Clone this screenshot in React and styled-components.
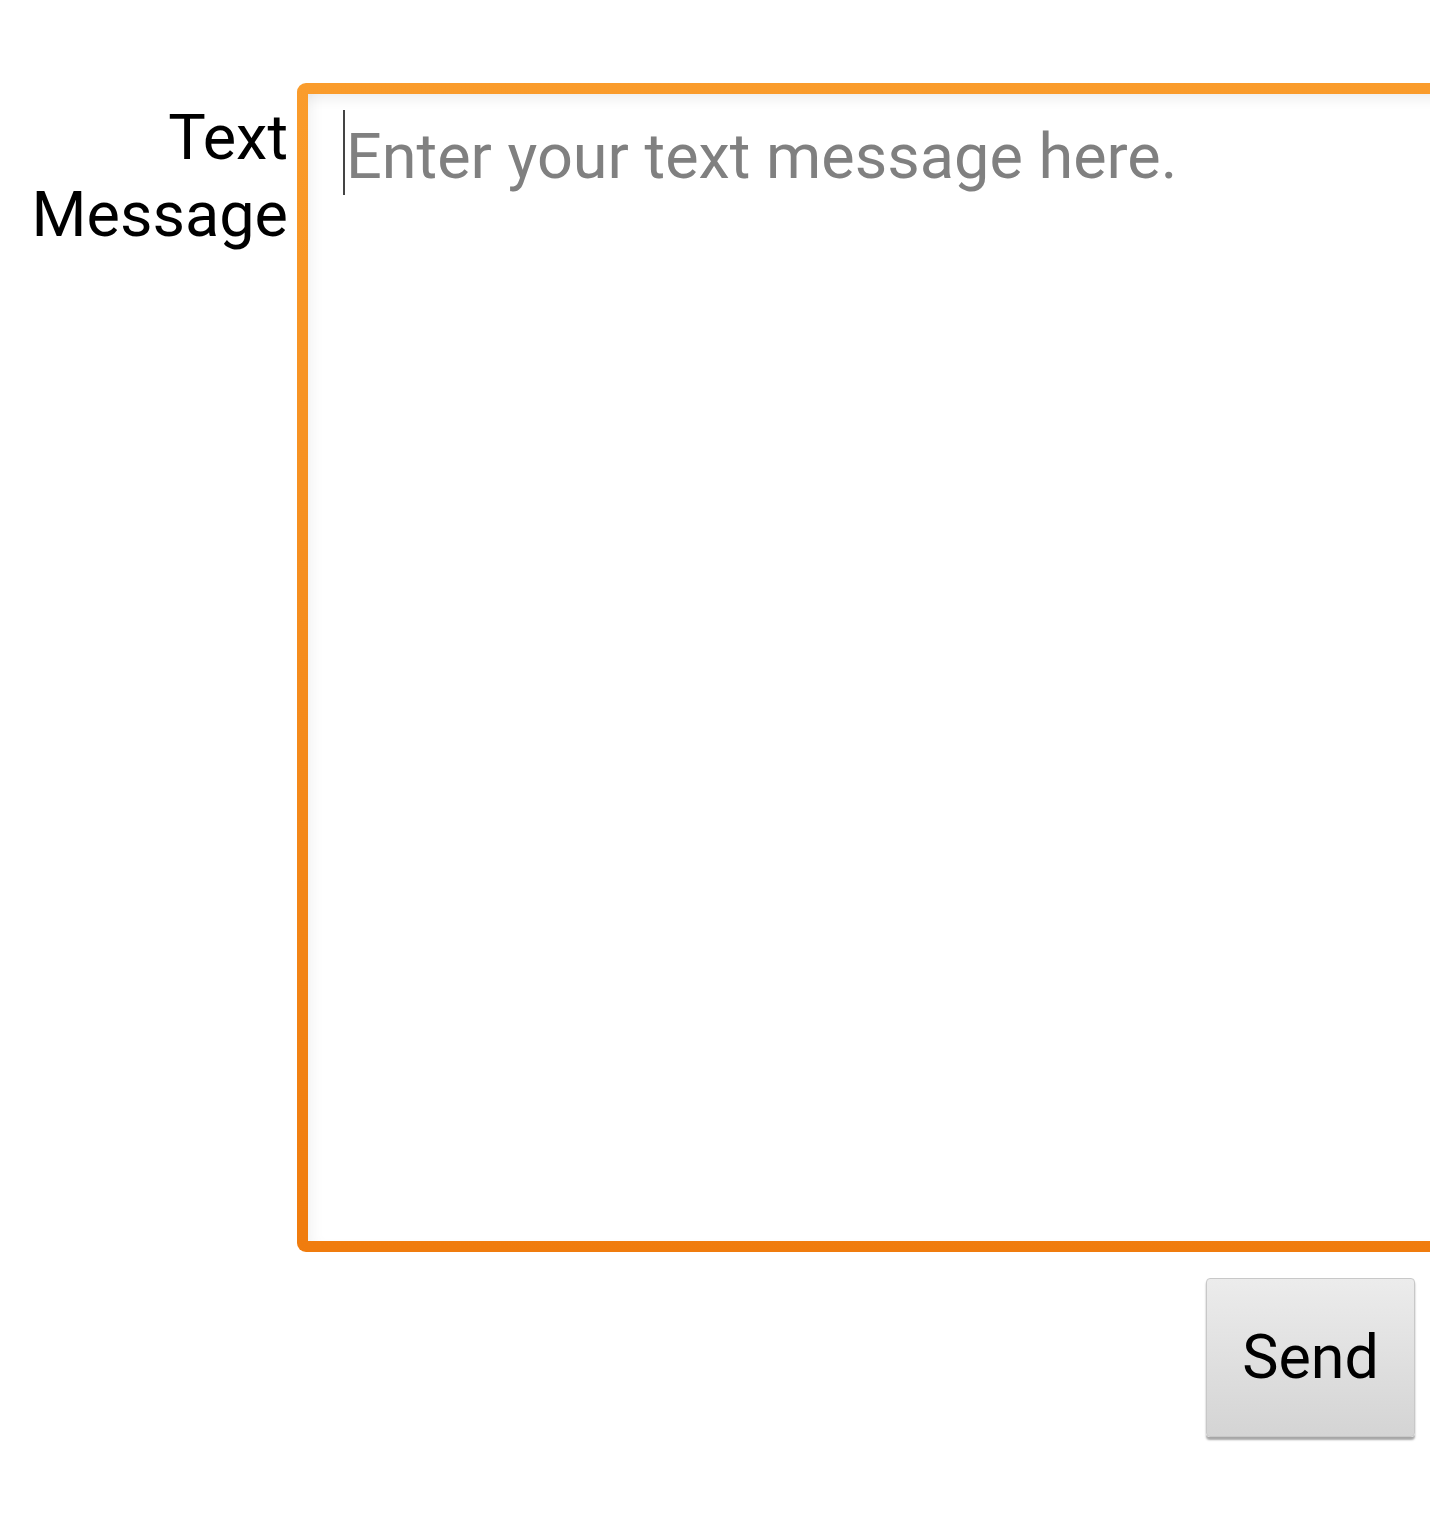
import styled, { createGlobalStyle } from 'styled-components';

const GlobalStyle = createGlobalStyle`
  html, body {
    margin: 0;
    padding: 0;
    background: #ffffff;
    overflow: hidden;
  }
  body {
    font-family: Roboto, "Liberation Sans", sans-serif;
  }
`;

const Page = styled.div`
  width: 1430px;
  height: 1538px;
  padding-top: 83px;
  box-sizing: border-box;
  overflow: hidden;
`;

const Row = styled.div`
  display: flex;
  align-items: flex-start;
`;

const Label = styled.label`
  flex: 0 0 288px;
  margin-right: 9px;
  padding-top: 16px;
  text-align: right;
  font-size: 63px;
  line-height: 77px;
  color: #000;
`;

// orange focus frame, runs past the right edge of the screen
const Field = styled.div`
  flex: 0 0 1180px;
  width: 1180px;
  height: 1169px;
  box-sizing: border-box;
  border: 11px solid transparent;
  border-radius: 9px;
  padding: 20px 35px;
  background: linear-gradient(#ffffff, #ffffff) padding-box,
    linear-gradient(#fa9c2c, #f07c0e) border-box;
  box-shadow: inset 0 12px 14px -8px rgba(0, 0, 0, 0.08),
    inset 12px 0 14px -8px rgba(0, 0, 0, 0.05);
`;

const PlaceholderLine = styled.div`
  display: flex;
  align-items: flex-start;
  font-size: 63px;
  line-height: 85px;
  color: #808080;
`;

const Caret = styled.span`
  display: inline-block;
  width: 2px;
  height: 85px;
  margin: -4px 1px 0 0;
  background: #444;
`;

const Actions = styled.div`
  display: flex;
  justify-content: flex-end;
  padding: 26px 15px 0 0;
`;

const Button = styled.button`
  width: 209px;
  height: 159px;
  border: 1px solid #c8c8c8;
  border-radius: 4px;
  background: linear-gradient(#ececec, #d4d4d4);
  box-shadow: 0 3px 2px rgba(0, 0, 0, 0.35);
  font-family: Roboto, "Liberation Sans", sans-serif;
  font-size: 61px;
  color: #000;
  padding: 0 0 2px;
`;

export default function App() {
  return (
    <Page>
      <GlobalStyle />
      <Row>
        <Label>
          Text
          <br />
          Message
        </Label>
        <Field>
          <PlaceholderLine>
            <Caret />
            Enter your text message here.
          </PlaceholderLine>
        </Field>
      </Row>
      <Actions>
        <Button>Send</Button>
      </Actions>
    </Page>
  );
}
